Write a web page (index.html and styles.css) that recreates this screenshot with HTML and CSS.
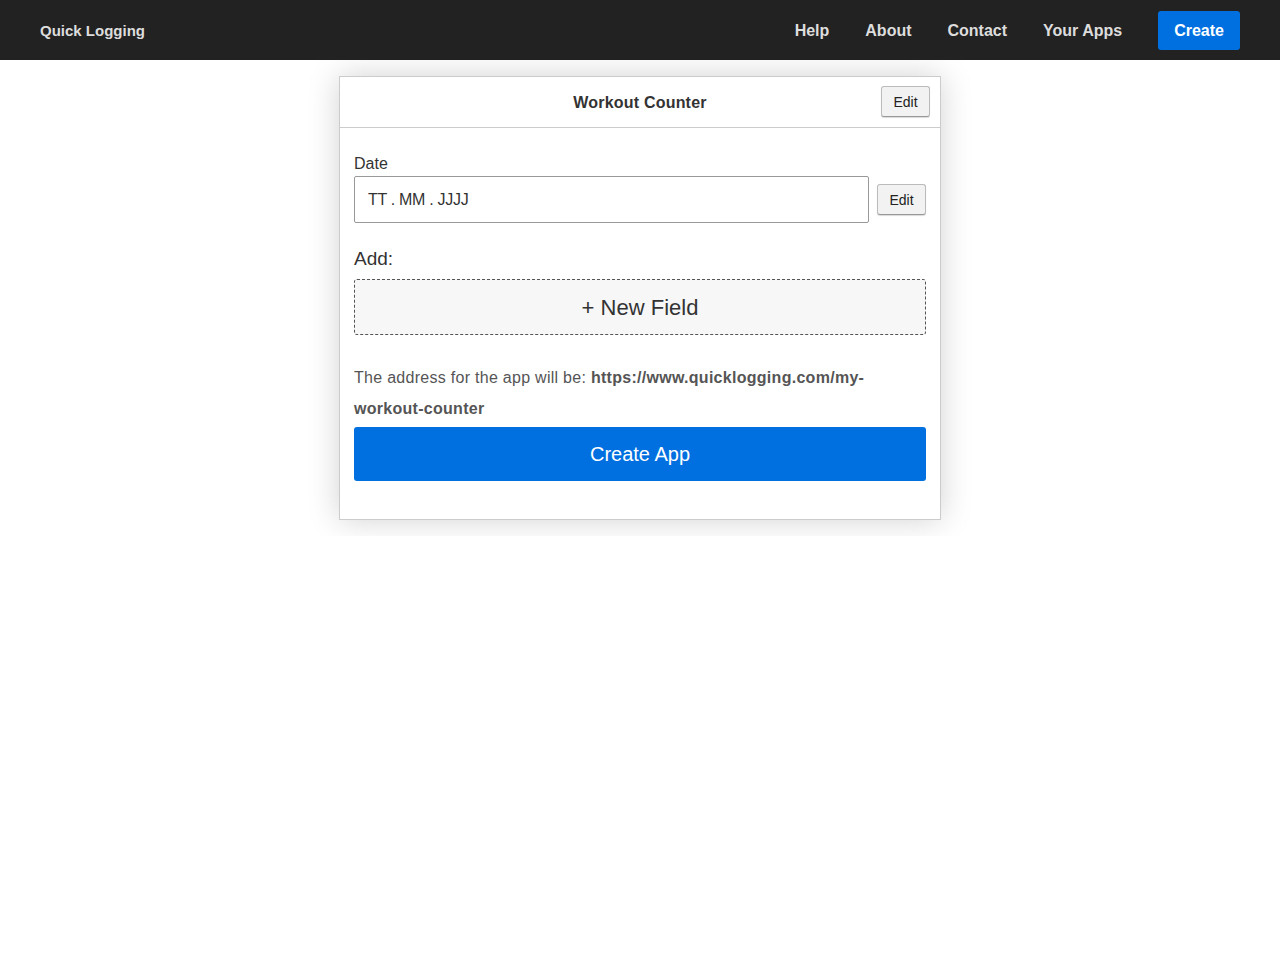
FILE: index.html
```html
<!DOCTYPE html>
<html>
<head>
<meta charset="utf-8">
<link rel="stylesheet" href="styles.css">
</head>
<body>
<nav class="navbar">
  <a class="brand">Quick Logging</a>
  <div class="nav-links">
    <a class="nav-link">Help</a>
    <a class="nav-link">About</a>
    <a class="nav-link">Contact</a>
    <a class="nav-link">Your Apps</a>
    <a class="nav-create">Create</a>
  </div>
</nav>
<main class="stage">
  <section class="card">
    <header class="card-header">
      <h1 class="card-title">Workout Counter</h1>
      <button class="edit-btn header-edit">Edit</button>
    </header>
    <div class="card-body">
      <div class="field">
        <label class="field-label">Date</label>
        <div class="field-row">
          <div class="input">TT . MM . JJJJ</div>
          <button class="edit-btn">Edit</button>
        </div>
      </div>
      <div class="add-label">Add:</div>
      <div class="new-field">+ New Field</div>
      <p class="address">The address for the app will be: <strong>https://www.quicklogging.com/my-</strong><strong>workout-counter</strong></p>
      <button class="create-app">Create App</button>
    </div>
  </section>
</main>
</body>
</html>
```
FILE: styles.css
```css
* { box-sizing: border-box; }
html, body { margin: 0; padding: 0; background: #fff; }
body { font-family: "Liberation Sans", Arial, Helvetica, sans-serif; color: #333; }

.navbar {
  height: 60px;
  background: #222;
  display: flex;
  align-items: center;
  justify-content: space-between;
  padding: 0 40px;
}
.brand {
  color: #ddd;
  font-weight: bold;
  font-size: 15px;
}
.nav-links {
  display: flex;
  align-items: center;
  padding-top: 1px;
}
.nav-link {
  color: #ddd;
  font-weight: bold;
  font-size: 16px;
  padding: 0 18px;
}
.nav-create {
  margin-left: 18px;
  background: #0070e0;
  color: #fff;
  font-weight: bold;
  font-size: 16px;
  height: 39px;
  line-height: 39px;
  padding: 0 16px 0 16px;
  border-radius: 3px;
  margin-top: -1px;
}

.stage {
  overflow: hidden;
  padding: 16px 0 16px;
  display: flex;
  justify-content: center;
}
.card {
  width: 602px;
  border: 1px solid #ccc;
  background: #fff;
  box-shadow: 0 0 30px rgba(0,0,0,0.18);
}
.card-header {
  position: relative;
  height: 51px;
  border-bottom: 1px solid #ccc;
  display: flex;
  align-items: center;
  justify-content: center;
  padding-top: 2px;
}
.card-title {
  margin: 0;
  font-size: 16px;
  font-weight: bold;
  color: #333;
  letter-spacing: 0.2px;
}
.edit-btn {
  font-family: "Liberation Sans", Arial, sans-serif;
  font-size: 14px;
  color: #222;
  background: #f2f2f2;
  border: 1px solid #bbb;
  border-bottom-color: #999;
  border-radius: 3px;
  height: 31px;
  width: 49px;
  padding: 0;
  box-shadow: 0 1px 1px rgba(0,0,0,0.15);
}
.header-edit {
  position: absolute;
  right: 10px;
  top: 9px;
}
.card-body {
  padding: 26px 14px 38px;
}
.field-label {
  display: block;
  font-size: 16px;
  color: #333;
  line-height: 20px;
  margin-bottom: 2px;
}
.field-row {
  display: flex;
  align-items: center;
  gap: 8px;
}
.input {
  flex: 1;
  height: 47px;
  border: 1px solid #999;
  border-radius: 2px;
  padding: 0 13px;
  display: flex;
  align-items: center;
  font-size: 16px;
  color: #333;
  letter-spacing: -0.3px;
}
.add-label {
  font-size: 19px;
  color: #333;
  margin-top: 24px;
  line-height: 24px;
}
.new-field {
  margin-top: 8px;
  height: 56px;
  border: 1px dashed #555;
  border-radius: 3px;
  background: #f7f7f7;
  display: flex;
  align-items: center;
  justify-content: center;
  font-size: 22px;
  color: #333;
  padding-top: 2px;
}
.address {
  margin: 27px 0 3px;
  font-size: 16px;
  line-height: 31px;
  color: #555;
  letter-spacing: 0.28px;
}
.address strong { color: #555; }
.create-app {
  display: block;
  width: 100%;
  height: 54px;
  background: #0070e0;
  color: #fff;
  border: none;
  border-radius: 3px;
  font-family: "Liberation Sans", Arial, sans-serif;
  font-size: 20px;
}
```
